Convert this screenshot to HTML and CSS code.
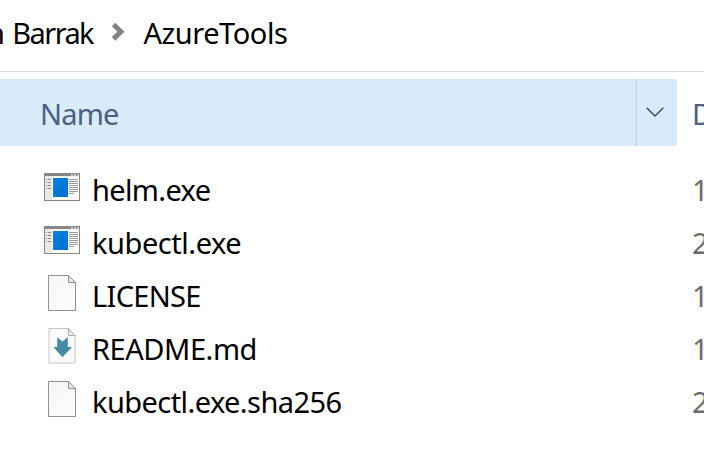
FILE: index.html
```html
<!DOCTYPE html>
<html lang="en">
<head>
<meta charset="utf-8">
<title>AzureTools</title>
<link rel="stylesheet" href="styles.css">
</head>
<body>
<svg class="defs" aria-hidden="true">
  <defs>
    <linearGradient id="paper" x1="0" y1="0" x2="1" y2="1"><stop offset="0" stop-color="#f5f6f7"/><stop offset="1" stop-color="#fdfdfe"/></linearGradient>
    <linearGradient id="blue" x1="0" y1="0" x2="1" y2="1"><stop offset="0" stop-color="#0a80dc"/><stop offset="1" stop-color="#0071d3"/></linearGradient>
    <symbol id="exe" viewBox="0 0 36 28">
      <path fill="#84888b" d="M0 0h36v28H0z"/>
      <path fill="#fff" d="M1 4h34v23H1z"/>
      <path fill="#e9e9e9" d="M1 4h7v23H1z"/>
      <path fill="#f3eeea" d="M1 3h34v1H1z"/>
      <path fill="#c9cccd" d="M27 1h2v2h-2zM30 1h2v2h-2zM33 1h2v2h-2z"/>
      <path fill="#8b8b8b" d="M2 6h1v1H2zM4 6h3v1H4zM2 9h1v1H2zM4 9h3v1H4zM2 12h1v1H2zM4 12h3v1H4zM2 15h1v1H2zM4 15h3v1H4z"/>
      <path fill="url(#blue)" d="M9 5h15v19H9z"/>
      <path fill="#999" d="M25 6h9v1h-9zM25 8h9v1h-9zM25 10h9v1h-9zM25 12h9v1h-9zM25 14h9v1h-9zM25 16h9v1h-9zM25 18h9v1h-9zM25 20h5v1h-5z"/>
    </symbol>
    <symbol id="file" viewBox="0 0 28 36">
      <path fill="url(#paper)" stroke="#919191" d="M.5.5h20l7 7v28H.5z"/>
      <path fill="#e6e6e6" stroke="#919191" d="M20.500.5v7h7z"/>
    </symbol>
    <symbol id="md" viewBox="0 0 28 36">
      <path fill="#fbfbfb" stroke="#c6c6c6" d="M1 .5h19.500l6.500 7v27.500H1z"/>
      <path fill="#e8e8e8" stroke="#b0b0b0" d="M20.500.5v7H27z"/>
      <path fill="#468aa7" d="M9.200 9.300l5.300 4.200 5.300-4.200V19H24l-9.500 10.300L5.300 19h3.900z"/>
    </symbol>
  </defs>
</svg>
<nav class="path">
  <span class="crumb parent">n Barrak</span>
  <svg class="sep" viewBox="0 0 14 20"><path d="M2.500 2.500l7.500 7.200-7.500 7.200"/></svg>
  <span class="crumb current">AzureTools</span>
</nav>
<div class="columns">
  <div class="col-name">Name</div>
  <div class="col-menu"><svg viewBox="0 0 18 10"><path d="M.7.7L9 9 17.300.7"/></svg></div>
  <div class="col-date">Date</div>
</div>
<main class="list">
  <div class="row"><div class="icon"><svg class="exe"><use href="#exe"/></svg></div><span class="name helm">helm.exe</span><span class="date">1</span></div>
  <div class="row"><div class="icon"><svg class="exe"><use href="#exe"/></svg></div><span class="name kubectl">kubectl.exe</span><span class="date">2</span></div>
  <div class="row"><div class="icon"><svg class="doc"><use href="#file"/></svg></div><span class="name license">LICENSE</span><span class="date">1</span></div>
  <div class="row"><div class="icon"><svg class="doc"><use href="#md"/></svg></div><span class="name readme">README.md</span><span class="date">1</span></div>
  <div class="row"><div class="icon"><svg class="doc"><use href="#file"/></svg></div><span class="name sha">kubectl.exe.sha256</span><span class="date">2</span></div>
</main>
</body>
</html>
```
FILE: styles.css
```css
* { box-sizing: border-box; }
html { overflow: hidden; }
body {
  margin: 0;
  width: 704px;
  height: 462px;
  overflow: hidden;
  background: #fff;
  color: #000;
  font: 29px/40px "Noto Sans", "Open Sans", sans-serif;
  white-space: nowrap;
}
svg { display: block; }
.defs { position: absolute; width: 0; height: 0; }
.path {
  display: flex;
  height: 72px;
  border-bottom: 1px solid #d9d9d9;
}
.crumb { padding-top: 13px; }
.parent {
  display: flex;
  justify-content: flex-end;
  width: 111px;
  padding-right: 18px;
  letter-spacing: -1.6px;
  word-spacing: 3px;
}
.sep { width: 14px; height: 20px; margin-top: 22px; fill: none; stroke: #848484; stroke-width: 5; }
.current { margin-left: 18.5px; letter-spacing: -0.45px; }
.columns { display: flex; height: 67px; margin-top: 7px; }
.columns > div { flex: none; }
.col-name {
  width: 636px;
  padding: 15px 0 0 40px;
  background: #d9eaf8;
  color: #4a6184;
  letter-spacing: -0.8px;
}
.col-menu {
  width: 41px;
  padding: 28px 0 0 9px;
  border-left: 1px solid #bdd0e0;
  background: #d9eaf8;
}
.col-menu svg { width: 18px; height: 10px; fill: none; stroke: #444; stroke-width: 1.3; }
.columns > .col-date { width: 27px; overflow: hidden; padding: 15px 0 0 15px; color: #4a6184; }
.list { padding-top: 15px; }
.row { display: grid; grid-template-columns: 92px 600px 12px; height: 53px; }
.icon { display: flex; align-items: flex-start; padding-left: 44px; }
.exe { width: 36px; height: 28px; margin-top: 12px; }
.doc { width: 28px; height: 36px; margin: 8px 0 0 4px; }
.name, .date { padding-top: 9px; }
.date { overflow: hidden; color: #6d6d6d; }
.helm { letter-spacing: -0.65px; }
.kubectl { letter-spacing: -0.45px; }
.license { letter-spacing: -0.7px; }
.readme { letter-spacing: -0.45px; }
.sha { letter-spacing: -0.57px; }
```
